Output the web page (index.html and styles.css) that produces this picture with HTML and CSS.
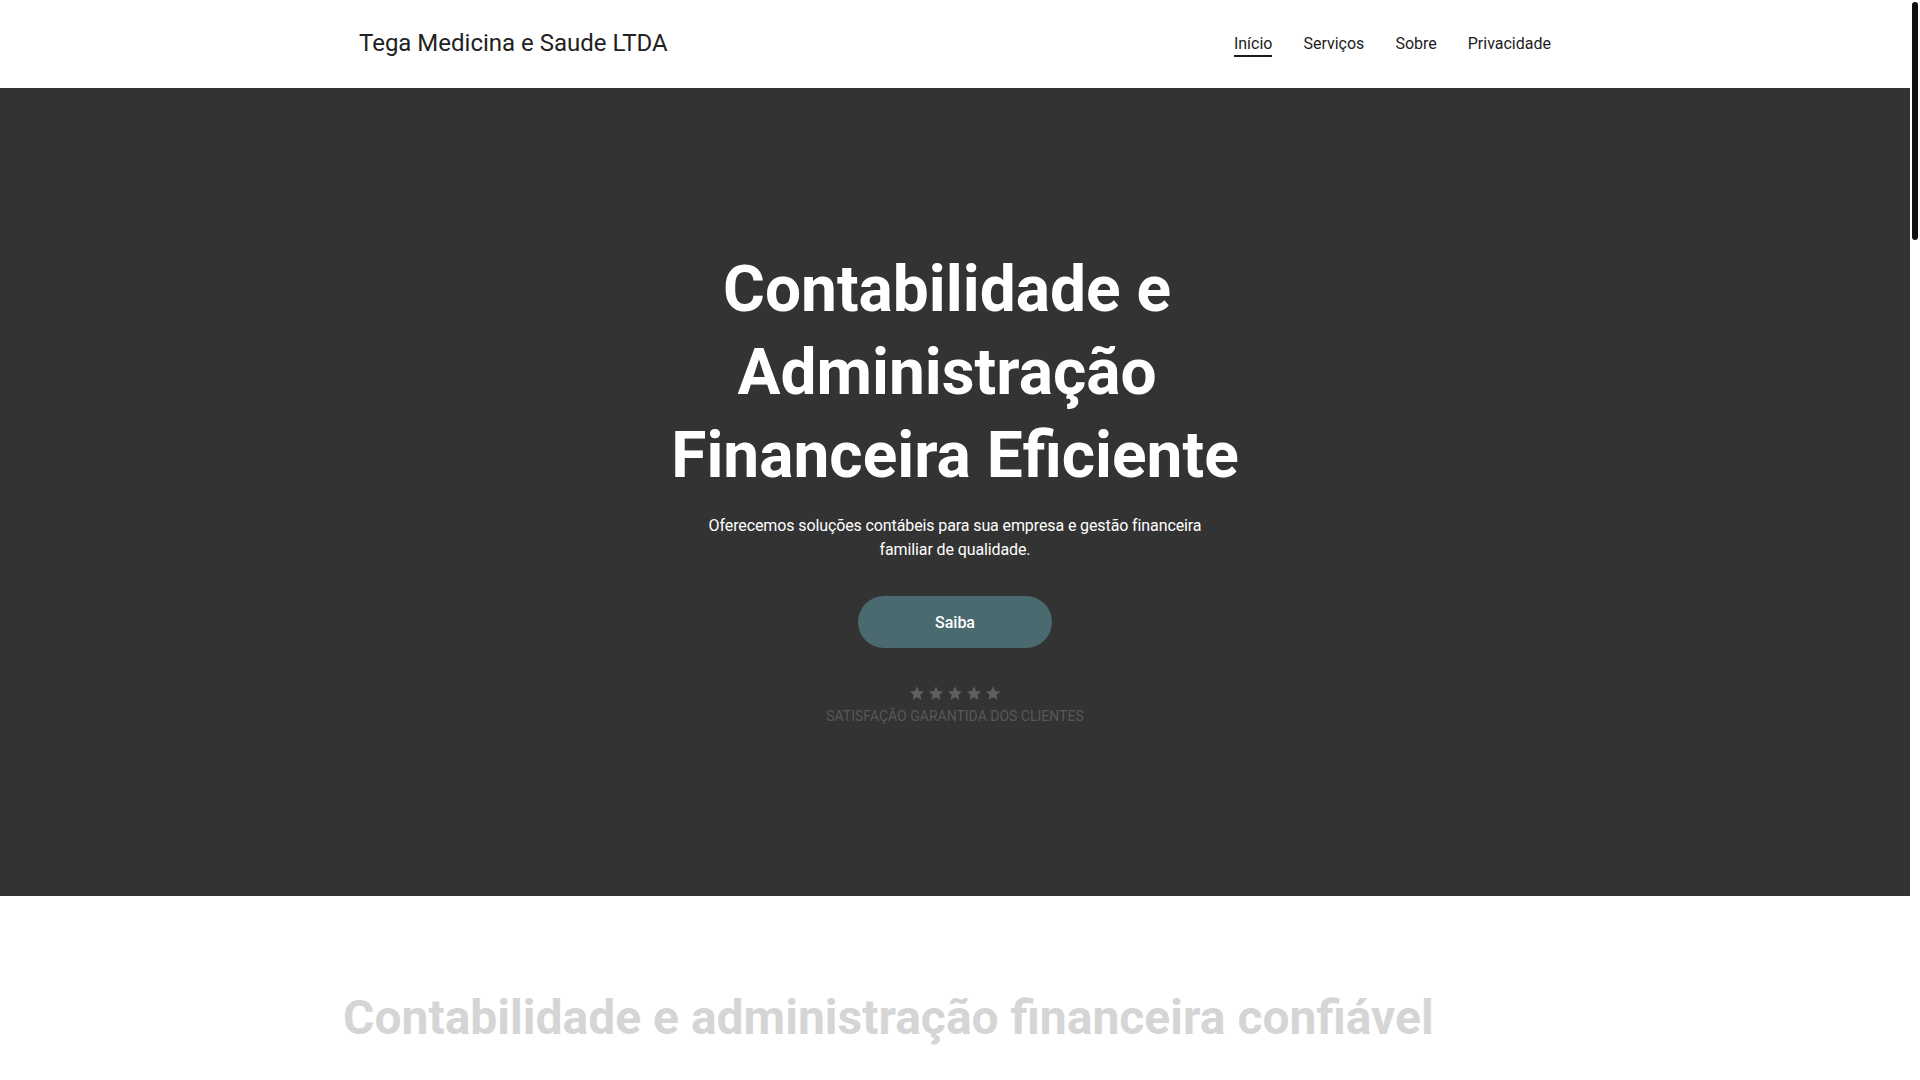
FILE: index.html
```html
<!DOCTYPE html>
<html lang="pt-BR">
<head>
<meta charset="utf-8">
<title>Tega Medicina e Saude LTDA</title>
<link rel="stylesheet" href="styles.css">
</head>
<body>
<header class="site-header">
  <div class="container header-inner">
    <a class="brand" href="#">Tega Medicina e Saude LTDA</a>
    <nav class="nav">
      <a class="nav-link active" href="#">Início</a>
      <a class="nav-link" href="#">Serviços</a>
      <a class="nav-link" href="#">Sobre</a>
      <a class="nav-link" href="#">Privacidade</a>
    </nav>
  </div>
</header>
<main>
  <section class="hero">
    <div class="hero-inner">
      <h1 class="hero-title">Contabilidade e Administração Financeira Eficiente</h1>
      <p class="hero-text">Oferecemos soluções contábeis para sua empresa e gestão financeira familiar de qualidade.</p>
      <a class="btn" href="#">Saiba</a>
      <div class="rating">
        <div class="stars">
          <svg viewBox="0 0 24 24" class="star"><path d="M12 1.8l3.1 7.1 7.7.7-5.8 5.1 1.7 7.6L12 18.3l-6.7 4 1.7-7.6-5.8-5.1 7.7-.7z"/></svg>
          <svg viewBox="0 0 24 24" class="star"><path d="M12 1.8l3.1 7.1 7.7.7-5.8 5.1 1.7 7.6L12 18.3l-6.7 4 1.7-7.6-5.8-5.1 7.7-.7z"/></svg>
          <svg viewBox="0 0 24 24" class="star"><path d="M12 1.8l3.1 7.1 7.7.7-5.8 5.1 1.7 7.6L12 18.3l-6.7 4 1.7-7.6-5.8-5.1 7.7-.7z"/></svg>
          <svg viewBox="0 0 24 24" class="star"><path d="M12 1.8l3.1 7.1 7.7.7-5.8 5.1 1.7 7.6L12 18.3l-6.7 4 1.7-7.6-5.8-5.1 7.7-.7z"/></svg>
          <svg viewBox="0 0 24 24" class="star"><path d="M12 1.8l3.1 7.1 7.7.7-5.8 5.1 1.7 7.6L12 18.3l-6.7 4 1.7-7.6-5.8-5.1 7.7-.7z"/></svg>
        </div>
        <p class="rating-text">Satisfação garantida dos clientes</p>
      </div>
    </div>
  </section>
  <section class="about">
    <div class="about-inner">
      <h2 class="about-title">Contabilidade e administração financeira confiável</h2>
    </div>
  </section>
</main>
<div class="scrollbar" aria-hidden="true"><div class="scrollbar-thumb"></div></div>
</body>
</html>
```
FILE: styles.css
```css
* {
  box-sizing: border-box;
}

body {
  margin: 0;
  padding-right: 10px;
  font-family: Roboto, "Liberation Sans", Arial, sans-serif;
  color: #222222;
  background: #ffffff;
}

a {
  text-decoration: none;
  color: inherit;
}

/* page scrollbar, as the browser shows it */
.scrollbar {
  position: fixed;
  top: 0;
  right: 0;
  width: 10px;
  height: 100vh;
  background: #ffffff;
  padding: 2px 2px 0;
}

.scrollbar-thumb {
  height: 238px;
  background: #111111;
  border-radius: 3px;
}

.container {
  width: 1192px;
  margin: 0 auto;
}

.site-header {
  background: #ffffff;
  height: 88px;
}

.header-inner {
  height: 88px;
  display: flex;
  align-items: center;
  justify-content: space-between;
}

.brand {
  font-size: 24px;
  color: #222222;
  line-height: 1;
  padding-bottom: 2px;
}

.nav {
  display: flex;
  gap: 31px;
  align-items: flex-start;
  padding-top: 3px;
}

.nav-link {
  font-size: 16px;
  color: #1c1c1c;
  line-height: 20px;
  padding-bottom: 1px;
  border-bottom: 2px solid transparent;
}

.nav-link.active {
  border-bottom-color: #1c1c1c;
}

.hero {
  background: #333333;
  height: 808px;
  color: #ffffff;
}

.hero-inner {
  display: flex;
  flex-direction: column;
  align-items: center;
  text-align: center;
  padding-top: 160px;
}

.hero-title {
  margin: 0;
  font-size: 64px;
  font-weight: 700;
  line-height: 83px;
  max-width: 600px;
  white-space: break-spaces;
}

.hero-text {
  margin: 17px 0 0;
  font-size: 16px;
  line-height: 24px;
  max-width: 510px;
  letter-spacing: -0.11px;
}

.btn {
  margin-top: 34px;
  width: 194px;
  height: 52px;
  border-radius: 26px;
  background: #4a6a6f;
  color: #ffffff;
  font-size: 16px;
  font-weight: 500;
  display: flex;
  align-items: center;
  justify-content: center;
}

.rating {
  margin-top: 37px;
  display: flex;
  flex-direction: column;
  align-items: center;
}

.stars {
  display: flex;
  gap: 3px;
}

.star {
  width: 16px;
  height: 16px;
  fill: #5f5f5f;
}

.rating-text {
  margin: 6px 0 0;
  font-size: 14px;
  line-height: 18px;
  text-transform: uppercase;
  color: #585858;
}

.about {
  padding: 93px 0 0;
  min-height: 4020px;
}

.about-inner {
  width: 1224px;
  margin: 0 auto;
}

.about-title {
  margin: 0;
  font-size: 48px;
  font-weight: 700;
  line-height: 58px;
  color: #d5d5d5;
}
```
